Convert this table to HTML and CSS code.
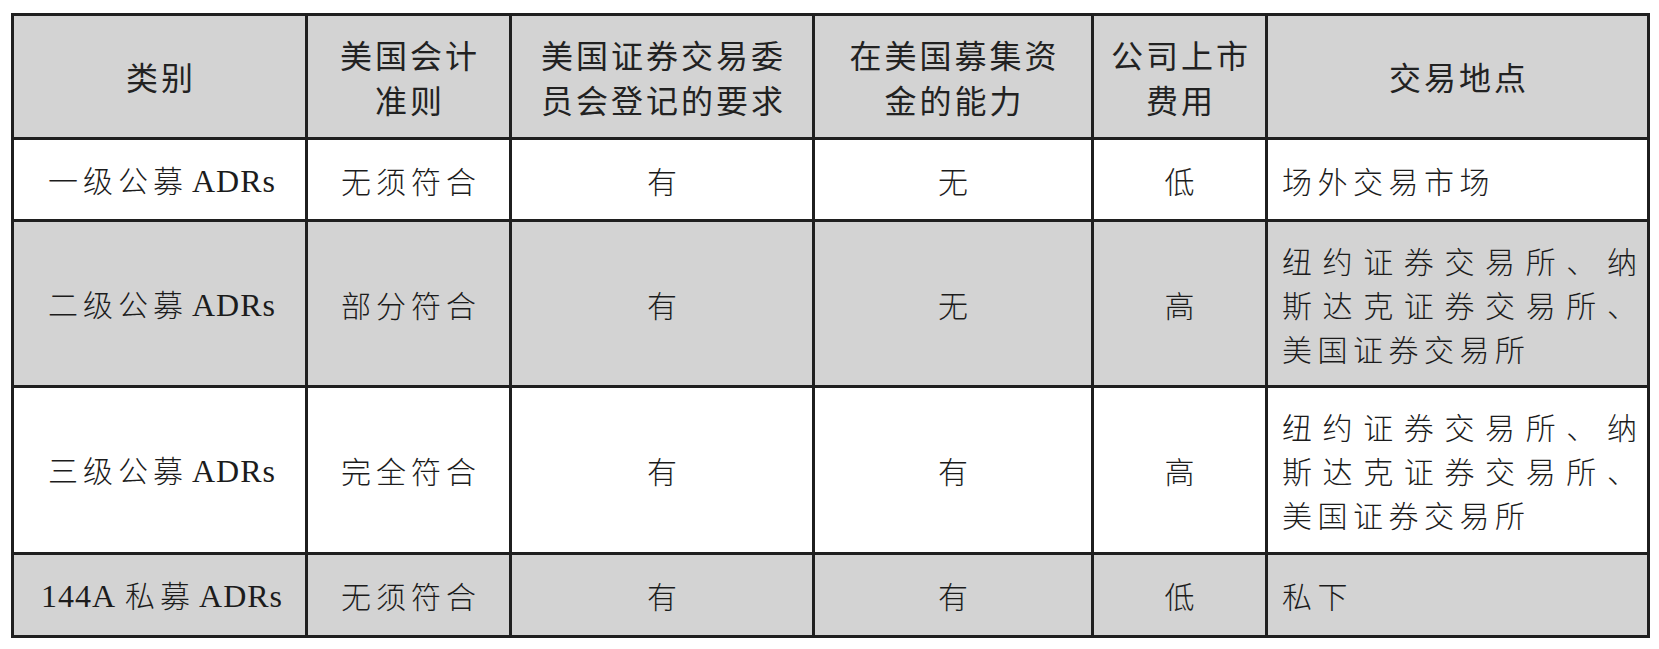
FILE: index.html
```html
<!DOCTYPE html>
<html lang="zh-CN">
<head>
<meta charset="utf-8">
<title>ADRs 类别</title>
<link rel="stylesheet" href="styles.css">
</head>
<body>
<div class="table">
  <div class="cell head"><span class="txt">类别</span></div>
  <div class="cell head"><span class="txt">美国会计<br>准则</span></div>
  <div class="cell head"><span class="txt">美国证券交易委<br>员会登记的要求</span></div>
  <div class="cell head"><span class="txt">在美国募集资<br>金的能力</span></div>
  <div class="cell head"><span class="txt">公司上市<br>费用</span></div>
  <div class="cell head"><span class="txt">交易地点</span></div>

  <div class="cell"><span class="txt"><span class="cjk">一级公募</span><span class="lat sp">ADRs</span></span></div>
  <div class="cell"><span class="txt">无须符合</span></div>
  <div class="cell"><span class="txt">有</span></div>
  <div class="cell"><span class="txt">无</span></div>
  <div class="cell"><span class="txt">低</span></div>
  <div class="cell left"><span class="txt">场外交易市场</span></div>

  <div class="cell gray"><span class="txt"><span class="cjk">二级公募</span><span class="lat sp">ADRs</span></span></div>
  <div class="cell gray"><span class="txt">部分符合</span></div>
  <div class="cell gray"><span class="txt">有</span></div>
  <div class="cell gray"><span class="txt">无</span></div>
  <div class="cell gray"><span class="txt">高</span></div>
  <div class="cell gray left"><div class="lines"><span class="ln j">纽约证券交易所、纳</span><span class="ln j">斯达克证券交易所、</span><span class="ln">美国证券交易所</span></div></div>

  <div class="cell"><span class="txt"><span class="cjk">三级公募</span><span class="lat sp">ADRs</span></span></div>
  <div class="cell"><span class="txt">完全符合</span></div>
  <div class="cell"><span class="txt">有</span></div>
  <div class="cell"><span class="txt">有</span></div>
  <div class="cell"><span class="txt">高</span></div>
  <div class="cell left"><div class="lines"><span class="ln j">纽约证券交易所、纳</span><span class="ln j">斯达克证券交易所、</span><span class="ln">美国证券交易所</span></div></div>

  <div class="cell gray"><span class="txt"><span class="lat">144A</span><span class="cjk sp-wide">私募</span><span class="lat sp">ADRs</span></span></div>
  <div class="cell gray"><span class="txt">无须符合</span></div>
  <div class="cell gray"><span class="txt">有</span></div>
  <div class="cell gray"><span class="txt">有</span></div>
  <div class="cell gray"><span class="txt">低</span></div>
  <div class="cell gray left"><span class="txt">私下</span></div>
</div>
</body>
</html>
```

FILE: styles.css
```css
html, body {
  margin: 0;
  padding: 0;
  background: #ffffff;
}

.table {
  margin: 13px 0 0 11px;
  width: 1639px;
  box-sizing: border-box;
  display: grid;
  grid-template-columns: 291px 201px 300px 276px 171px 379px;
  grid-template-rows: 121px 79px 163px 164px 80px;
  gap: 3px;
  padding: 3px;
  background: #1f1f1f;
}

.cell {
  background: #ffffff;
  display: flex;
  align-items: center;
  justify-content: center;
  text-align: center;
  color: #1c1c1c;
  font-family: "Noto Sans CJK SC", sans-serif;
  font-size: 30px;
  font-weight: 300;
  letter-spacing: 5px;
  line-height: 44px;
  padding-left: 5px;
}

.txt {
  display: block;
  white-space: nowrap;
}

.cell .lat {
  font-family: "Liberation Serif", serif;
  font-size: 32px;
  font-weight: 400;
  letter-spacing: 1px;
}

.cell .sp {
  margin-left: 4px;
}

.cell .sp-wide {
  margin-left: 9px;
}

.cell .cjk {
  font-family: "Noto Sans CJK SC", sans-serif;
}

.cell.head {
  background: #d3d3d3;
  font-weight: 400;
  font-size: 32px;
  letter-spacing: 3px;
  line-height: 45px;
  color: #222222;
  padding-left: 3px;
}

.cell.gray {
  background: #d3d3d3;
}

.cell.left {
  justify-content: flex-start;
  text-align: left;
  padding: 0 10px 0 14px;
  letter-spacing: 5.5px;
}

.lines {
  width: 100%;
  display: flex;
  flex-direction: column;
}

.ln {
  display: block;
}

.ln.j {
  text-align: justify;
  text-align-last: justify;
  letter-spacing: 0;
}
```
